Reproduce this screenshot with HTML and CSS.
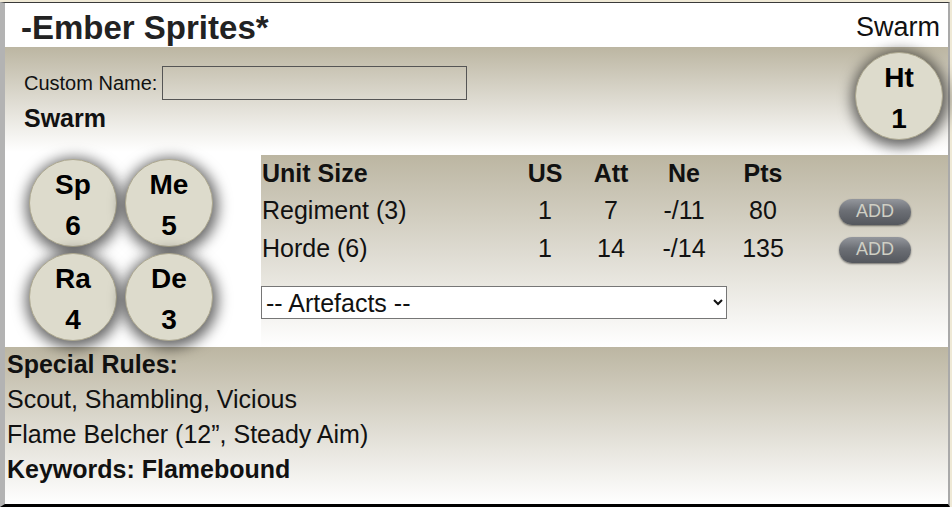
FILE: index.html
```html
<!DOCTYPE html>
<html>
<head>
<meta charset="utf-8">
<title>Ember Sprites</title>
<link rel="stylesheet" href="styles.css">
</head>
<body>

<div class="unit">

<div class="head">
	<span class="name">-Ember Sprites*</span>
	<span class="type">Swarm</span>
</div>

<div class="info">
	<div class="names">
		<div class="custom">
			<label for="cname">Custom Name:</label>
			<input id="cname" type="text">
		</div>
		<div class="kind">Swarm</div>
	</div>
	<div class="stat ht">Ht<br>1</div>
</div>

<div class="stats">
	<div class="circles">
		<div class="stat">Sp<br>6</div>
		<div class="stat">Me<br>5</div>
		<div class="stat">Ra<br>4</div>
		<div class="stat">De<br>3</div>
	</div>

	<div class="sizes">
		<table>
		<tr>
			<th class="c1">Unit Size</th>
			<th class="c2">US</th>
			<th class="c3">Att</th>
			<th class="c4">Ne</th>
			<th class="c5">Pts</th>
			<th class="c6"></th>
		</tr>
		<tr>
			<td class="c1">Regiment (3)</td>
			<td>1</td>
			<td>7</td>
			<td>-/11</td>
			<td>80</td>
			<td><button class="add">ADD</button></td>
		</tr>
		<tr>
			<td class="c1">Horde (6)</td>
			<td>1</td>
			<td>14</td>
			<td>-/14</td>
			<td>135</td>
			<td><button class="add">ADD</button></td>
		</tr>
		</table>

		<select class="arte">
			<option>-- Artefacts --</option>
		</select>
	</div>
</div>

<div class="rules">
	<b>Special Rules:</b><br>
	Scout, Shambling, Vicious<br>
	Flame Belcher (12&rdquo;, Steady Aim)<br>
	<b>Keywords: Flamebound</b>
</div>

</div>

</body>
</html>
```

FILE: styles.css
```css
body { margin: 0; background-color: #efe9d6; font-family: "Liberation Sans", Arial, sans-serif; }

.unit { margin: 2px 2px 0 0;
	border-top: 1px solid #3a3a3a;
	border-left: 5px solid #b3b3b3;
	border-right: 2px solid #a9a9a9;
	border-bottom: 3px solid #000;
	background-color: #fff;
	height: 501px; }

.head { height: 44px;
	display: flex;
	justify-content: space-between;
	align-items: center;
	padding: 5px 8px 0 16px;
	box-sizing: border-box; }
.name { font-size: 33px; font-weight: bold; color: #222; }
.type { font-size: 27px; color: #111; }

.info { height: 105px;
	display: flex;
	justify-content: space-between;
	background: linear-gradient(#bcb6a2, #fff); }
.names { padding: 19px 0 0 19px; }
.custom { display: flex; align-items: center; font-size: 20px; color: #111; }
.custom input { margin-left: 5px;
	width: 305px;
	height: 34px;
	box-sizing: border-box;
	border: 1px solid #555;
	background: transparent; }
.kind { font-size: 25px; font-weight: bold; line-height: 36px; color: #111; }

.stat { width: 88px;
	height: 88px;
	box-sizing: border-box;
	border-radius: 50%;
	border: 1px solid #aca78f;
	background-color: #dddbcc;
	box-shadow: 1px 3px 14px 4px rgba(0,0,0,0.6);
	text-align: center;
	font-size: 28px;
	font-weight: bold;
	line-height: 41px;
	padding-top: 4px; }
.ht { margin: 5px 5px 0 0; }

.stats { height: 195px; display: flex; }
.circles { width: 232px;
	padding: 7px 0 0 24px;
	display: grid;
	grid-template-columns: 88px 88px;
	grid-template-rows: 88px 88px;
	column-gap: 8px;
	row-gap: 6px; }
.sizes { flex: 1;
	margin-top: 3px;
	background: linear-gradient(#bcb6a2, #fff); }

table { border-collapse: collapse; margin-left: 1px; font-size: 25px; color: #111; }
th, td { padding: 0; height: 38px; text-align: center; }
th { height: 36px; }
th.c1, td.c1 { text-align: left; }
.c1 { width: 250px; }
.c2 { width: 66px; }
.c3 { width: 66px; }
.c4 { width: 80px; }
.c5 { width: 78px; }
.c6 { width: 146px; }

button.add { width: 72px;
	height: 26px;
	border: none;
	border-radius: 13px;
	background: linear-gradient(#94979d 0%, #6c6f75 45%, #54575d 100%);
	box-shadow: 0 1px 2px rgba(0,0,0,0.5);
	color: #cfcfc4;
	font-family: "Liberation Sans", Arial, sans-serif;
	font-size: 18px;
	padding: 0;
	vertical-align: middle; }

.arte { margin-top: 19px;
	width: 466px;
	height: 33px;
	font-family: "Liberation Sans", Arial, sans-serif;
	font-size: 25px;
	color: #111;
	background-color: #fff;
	border: 1px solid #767676; }

.rules { height: 157px;
	box-sizing: border-box;
	padding-left: 2px;
	font-size: 25px;
	line-height: 35px;
	color: #111;
	background: linear-gradient(#bcb6a2, #fff); }
```
